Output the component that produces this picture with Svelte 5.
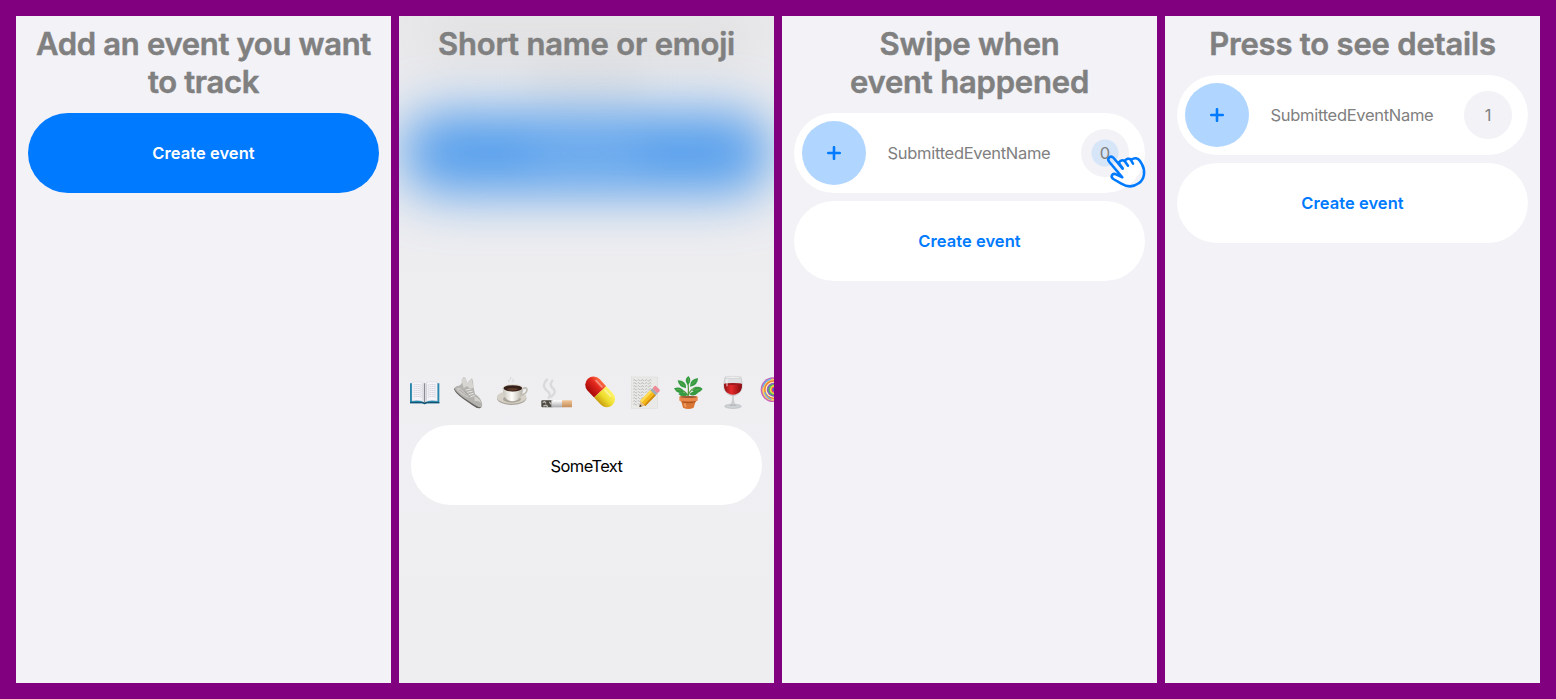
<script>
  const lines = [0, 1, 2, 3, 4, 5, 6];
</script>

{#snippet row(count, touching)}
  <div class="pill row">
    <div class="plus">
      <svg width="14" height="14" viewBox="0 0 14 14"><path d="M7 1.2V12.8M1.2 7H12.8" stroke="#007aff" stroke-width="2.6" stroke-linecap="round" /></svg>
    </div>
    <span class="name">SubmittedEventName</span>
    <div class="count" class:touching>{count}</div>
    {#if touching}
      <svg class="hand" width="100" height="90" viewBox="0 0 300 270" fill="none" stroke="#007aff" stroke-width="7.6" stroke-linecap="round" stroke-linejoin="round">
        <path d="M188 176L161 144C152 134 139 145 148 156L187 202L168 193C157 188 150 200 160 207L184 221C202 232 221 231 236 220C254 207 257 183 246 163L240 153C234 143 223 142 214 149C207 144 199 146 194 153C188 149 181 151 176 158" />
        <path d="M176 158L187 174M194 153L204 167M212 149L219 161" />
      </svg>
    {/if}
  </div>
{/snippet}

<main>
  <section>
    <h1 class="long">Add an event you want<br />to track</h1>
    <div class="pill primary">Create event</div>
  </section>

  <section class="entry">
    <div class="haze">
      <i class="line one"></i>
      <i class="line two"></i>
      <i class="blob"></i>
      <i class="label"></i>
    </div>
    <h1>Short name or emoji</h1>
    <div class="bottom">
      <div class="emojis">
        <svg viewBox="0 0 132 120">
          <path d="M21 34H109V94H72Q65 99 58 94H21Z" fill="#2786ae" />
          <path d="M21 90H109V94H72Q65 99 58 94H21Z" fill="#14536f" />
          <path d="M27 31Q49 25 65 34Q81 25 103 31V87Q80 82 65 91Q50 82 27 87Z" fill="#f5f4f8" stroke="#c9c8cf" />
          <path d="M65 34V91" stroke="#77757e" stroke-width="3" />
          <path d="M60 34V86M70 34V86" stroke="#d3d2da" stroke-width="4" />
          {#each lines as i}<path d="M32 {39 + i * 6}Q45 {35 + i * 6} 56 {40 + i * 6}M74 {40 + i * 6}Q86 {35 + i * 6} 98 {39 + i * 6}" fill="none" stroke="#b5b4c4" stroke-width="1.6" stroke-dasharray="5 1.5" />{/each}
        </svg>
        <svg viewBox="0 0 132 120">
          <path d="M21 48L30 42Q42 42 45 31Q42 22 50 16L56 18L60 34L75 19Q80 30 79 43L84 66Q100 75 105 93Q108 107 98 109Q87 107 78 99L50 79Q28 66 21 48Z" fill="#b4b2af" />
          <path d="M21 48Q31 65 50 77L80 97Q92 106 103 106L98 109Q87 109 76 100L48 80Q27 66 21 52Z" fill="#65625f" />
          <path d="M45 31Q42 22 50 16L56 18L60 34L75 21L79 48Q66 52 60 42L50 49Z" fill="#d6d5d2" />
          <path d="M31 48Q45 45 50 55L66 79L55 73Q36 63 28 50Z" fill="#cbc9c6" />
          <path d="M82 73Q97 78 102 92Q93 85 83 88Z" fill="#d3d1ce" />
          <path d="M56 54L72 51M60 61L77 57M65 68L80 64M70 75L83 70" stroke="#e6e5e3" stroke-width="3" />
          <path d="M36 53L58 70M41 49L63 68" stroke="#9b9996" stroke-width="2" />
        </svg>
        <svg viewBox="0 0 132 120">
          <defs><linearGradient id="cup"><stop stop-color="#c6c2b9" /><stop offset=".45" stop-color="#fffefa" /><stop offset="1" stop-color="#b1ada4" /></linearGradient></defs>
          <ellipse cx="62" cy="79" rx="44" ry="20" fill="#aaa59a" />
          <ellipse cx="62" cy="76" rx="44" ry="19" fill="#d5d1c8" />
          <ellipse cx="63" cy="81" rx="27" ry="11" fill="#aaa499" />
          <path d="M93 51Q108 43 108 54Q107 66 87 71" fill="none" stroke="#c0bcb2" stroke-width="5" />
          <path d="M35 48Q36 77 52 85Q65 91 79 84Q96 72 96 48Z" fill="url(#cup)" />
          <ellipse cx="65.5" cy="48" rx="31" ry="12" fill="#e2ded5" />
          <ellipse cx="65.5" cy="49" rx="28" ry="9.5" fill="#35211a" />
          <ellipse cx="65" cy="52" rx="16" ry="4" fill="#5d3b2b" />
          <path d="M55 31Q48 26 56 23Q64 19 58 15M63 31Q72 26 65 20" fill="none" stroke="#c9c9cc" stroke-width="3" opacity=".7" />
        </svg>
        <svg viewBox="0 0 132 120">
          <defs><linearGradient id="paper" x2="0" y2="1"><stop stop-color="#fff" /><stop offset="1" stop-color="#a9a9ad" /></linearGradient><linearGradient id="tip" x2="0" y2="1"><stop stop-color="#f0c697" /><stop offset="1" stop-color="#c38c58" /></linearGradient></defs>
          <path d="M39 80Q52 67 35 55Q17 39 38 21M46 76Q70 60 50 45Q43 35 54 24" fill="none" stroke="#cccccf" stroke-width="7" opacity=".6" />
          <rect x="19" y="85" width="35" height="21" rx="3" fill="#4d4943" />
          <path d="M23 92L29 89L33 94M43 90L49 97M25 102L33 100L39 104" stroke="#b9b6af" stroke-width="4" fill="none" />
          <rect x="49" y="85" width="34" height="21" fill="url(#paper)" />
          <rect x="81" y="85" width="30" height="21" rx="2" fill="url(#tip)" />
        </svg>
        <svg viewBox="0 0 132 120">
          <defs><linearGradient id="red" x2="0" y2="1"><stop stop-color="#ff7046" /><stop offset=".4" stop-color="#e2281e" /><stop offset="1" stop-color="#a70907" /></linearGradient><linearGradient id="yel" x2="0" y2="1"><stop stop-color="#fff66a" /><stop offset=".55" stop-color="#eddb2b" /><stop offset="1" stop-color="#c99b0e" /></linearGradient></defs>
          <g transform="translate(63.5 59.5) rotate(47)">
            <path d="M0 -25H-29A25 25 0 0 0 -29 25H0Z" fill="url(#red)" />
            <path d="M0 -25H29A25 25 0 0 1 29 25H0Z" fill="url(#yel)" />
            <path d="M-33 -14H-7M7 -14H30" stroke="#fff" stroke-width="5" stroke-linecap="round" opacity=".4" />
          </g>
        </svg>
        <svg viewBox="0 0 132 120">
          <rect x="25" y="15" width="79" height="94" fill="#e9e9e7" stroke="#cfcfcd" />
          {#each [25, 34, 43, 52, 61, 70, 79, 88, 97] as y, i}<path d="M31 {y}q3 -4 6 0t6 0t6 0t6 0t6 0{i < 5 ? 't6 0t6 0t6 0t6 0' : ''}" fill="none" stroke="#999" stroke-width="1.9" stroke-dasharray="13 3 8 2" />{/each}
          <g transform="translate(49 105) rotate(-46)">
            <path d="M0 0L17 -11V11Z" fill="#e5bd86" /><path d="M0 0L7 -4V4Z" fill="#333" />
            <rect x="15" y="-11" width="45" height="22" fill="#f5b91c" /><rect x="15" y="-11" width="45" height="7" fill="#ffdc56" /><rect x="15" y="6" width="45" height="5" fill="#ce8910" />
            <rect x="59" y="-11" width="9" height="22" fill="#9faeb6" /><rect x="67" y="-11" width="13" height="22" rx="5" fill="#ed8a94" />
          </g>
        </svg>
        <svg viewBox="0 0 132 120">
          <path d="M64 77Q65 50 63 28M64 72Q55 56 38 52M65 66Q73 49 89 45" fill="none" stroke="#4f9739" stroke-width="3.5" />
          <g fill="#359a40"><path d="M62 39Q49 23 64 12Q78 25 62 39Z" /><path d="M57 48Q35 46 32 25Q58 25 57 48Z" /><path d="M69 44Q68 22 93 18Q93 41 69 44Z" /><path d="M50 59Q32 70 21 49Q42 41 50 59Z" /><path d="M75 56Q92 35 107 51Q93 70 75 56Z" /><path d="M62 70Q45 78 34 66Q50 52 62 70Z" /><path d="M67 67Q80 51 94 62Q80 76 67 67Z" /></g>
          <path d="M64 18V30M39 31L52 42M86 25L74 38M29 52L42 54M97 52L85 55" stroke="#6db553" stroke-width="2" />
          <path d="M41 82L48 107Q64 115 80 107L88 82Z" fill="#d97635" /><path d="M44 88Q64 95 86 88" stroke="#ae5423" stroke-width="4" fill="none" />
          <rect x="37" y="72" width="55" height="16" rx="4" fill="#e9884a" /><ellipse cx="64.5" cy="75" rx="24" ry="3" fill="#9a5937" />
          <path d="M53 94L56 105" stroke="#ef9b61" stroke-width="5" />
        </svg>
        <svg viewBox="0 0 132 120">
          <defs><linearGradient id="wine"><stop stop-color="#8f1115" /><stop offset=".4" stop-color="#e52b2b" /><stop offset="1" stop-color="#83090e" /></linearGradient></defs>
          <ellipse cx="66" cy="103" rx="25" ry="6.5" fill="#cfd2d4" stroke="#92969a" />
          <path d="M63 65H69Q67 83 71 97L78 102H54L61 97Q65 83 63 65Z" fill="#b7babd" /><path d="M66 71V98" stroke="#f9f9fa" stroke-width="2" />
          <path d="M42 16Q35 40 40 53Q48 70 66 71Q84 70 92 53Q97 40 90 16Z" fill="#dedfe1" stroke="#b3b5b7" stroke-width="1.5" />
          <path d="M39 36Q38 48 43 56Q51 67 66 68Q81 67 89 56Q94 48 93 36Z" fill="url(#wine)" />
          <ellipse cx="66" cy="36" rx="26.5" ry="3" fill="#9d1b20" /><ellipse cx="66" cy="16" rx="24" ry="3" fill="#f1f1f2" stroke="#b7b7ba" />
          <path d="M48 22V43" stroke="#fff" stroke-width="4" opacity=".6" />
        </svg>
        <svg viewBox="0 0 132 120">
          <path d="M75 74L105 109" stroke="#eee" stroke-width="6" />
          {#each [[37, '#c963b7'], [33, '#f7d35b'], [28, '#ef7e36'], [24, '#fff0bf'], [21, '#8a5bc9'], [17, '#55bd58'], [13, '#f6e13e'], [9, '#e94372'], [6, '#2878db']] as [r, color], i}<circle cx={54 + i * 0.6} cy="53" {r} fill={color} />{/each}
          <path d="M23 46Q29 26 48 21M29 61Q35 78 49 82" fill="none" stroke="#6fa8ee" stroke-width="4" />
        </svg>
      </div>
      <div class="pill some">SomeText</div>
    </div>
  </section>

  <section>
    <h1>Swipe when<br />event happened</h1>
    {@render row('0', true)}
    <div class="pill link">Create event</div>
  </section>

  <section>
    <h1>Press to see details</h1>
    {@render row('1', false)}
    <div class="pill link">Create event</div>
  </section>
</main>

<style>
  :global(body) { margin: 0; }
  main {
    box-sizing: border-box;
    width: 1556px;
    height: 699px;
    padding: 16px;
    display: flex;
    gap: 8px;
    background: purple;
    font-family: Inter, "Liberation Sans", sans-serif;
  }
  section {
    box-sizing: border-box;
    width: 375px;
    height: 667px;
    padding: 9px 12px 0;
    display: flex;
    flex-direction: column;
    gap: 8px;
    background: #f2f2f7;
    overflow: hidden;
  }
  h1 {
    margin: 0 -10px 3.5px;
    font-size: 31px;
    line-height: 38px;
    font-weight: 600;
    letter-spacing: -0.2px;
    text-align: center;
    color: #808080;
    -webkit-text-stroke: 0.5px #808080;
    white-space: nowrap;
  }
  .long { letter-spacing: -0.32px; }
  .pill {
    box-sizing: border-box;
    height: 80px;
    flex: none;
    border-radius: 40px;
    background: #fff;
    display: flex;
    align-items: center;
    justify-content: center;
    font-size: 16.5px;
    letter-spacing: -0.3px;
    color: #000;
  }
  .some { letter-spacing: -0.6px; padding-top: 1px; }
  .primary, .link { font-weight: 600; letter-spacing: 0.05px; }
  .primary { background: #007aff; color: #fff; }
  .link { color: #007aff; }
  .row { position: relative; padding: 0 16px 0 8px; color: #808080; }
  .name { flex: 1; text-align: center; padding-right: 9px; }
  .plus, .count { display: flex; align-items: center; justify-content: center; border-radius: 50%; letter-spacing: 0; }
  .plus { width: 64px; height: 64px; background: #b0d6ff; }
  .count { width: 48px; height: 48px; background: #f2f2f7; }
  .touching { background: radial-gradient(circle, #d7e5f8 13px, #f2f2f7 14px); }
  .hand { position: absolute; left: 266px; top: -2.5px; }
  .entry { position: relative; background: #eeeef0; }
  .entry h1, .bottom { position: relative; }
  .haze { position: absolute; inset: 0; overflow: hidden; background: linear-gradient(#e8e8ea 0, #ebebee 80px, #ededf0 230px, #eeeef0 350px, #f0f0f4 440px, #efeff2 510px, #eeeef0 570px); }
  .haze i { position: absolute; filter: blur(20px); }
  .line { background: #c9c9c9; opacity: .32; }
  .one { left: 30px; top: 8px; width: 315px; height: 34px; }
  .two { left: 130px; top: 50px; width: 115px; height: 34px; }
  .haze .blob { left: 2px; top: 96px; width: 371px; height: 82px; border-radius: 40px; background: #559eec; filter: blur(26px); }
  .haze .label { left: 132px; top: 127px; width: 110px; height: 20px; background: #fff; opacity: .2; }
  .bottom { margin-top: 297.5px; display: flex; flex-direction: column; gap: 13px; }
  .emojis { display: flex; margin: 0 -12px 0 -8px; width: 371px; overflow: hidden; }
  .emojis svg { width: 44px; height: 40px; flex: none; }
</style>
